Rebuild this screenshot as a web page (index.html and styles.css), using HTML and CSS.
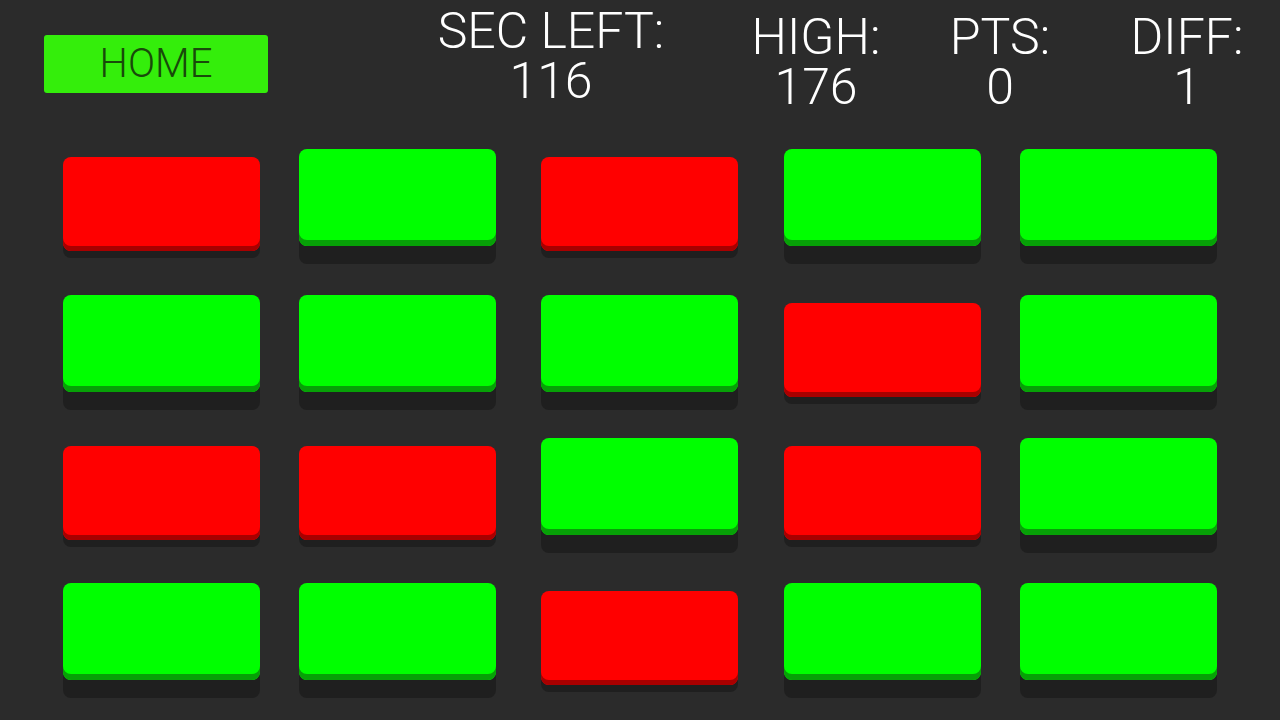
FILE: index.html
```html
<!DOCTYPE html>
<html>
<head>
<meta charset="utf-8">
<link rel="stylesheet" href="styles.css">
</head>
<body>
<div class="screen">
  <header class="header">
    <button class="home">HOME</button>
    <div class="stat stat-sec">SEC LEFT:<br>116</div>
    <div class="stat stat-high">HIGH:<br>176</div>
    <div class="stat stat-pts">PTS:<br>0</div>
    <div class="stat stat-diff">DIFF:<br>1</div>
  </header>
  <main class="board">
    <div class="tile red"></div><div class="tile green"></div><div class="tile red"></div><div class="tile green"></div><div class="tile green"></div>
    <div class="tile green"></div><div class="tile green"></div><div class="tile green"></div><div class="tile red"></div><div class="tile green"></div>
    <div class="tile red"></div><div class="tile red"></div><div class="tile green"></div><div class="tile red"></div><div class="tile green"></div>
    <div class="tile green"></div><div class="tile green"></div><div class="tile red"></div><div class="tile green"></div><div class="tile green"></div>
  </main>
</div>
</body>
</html>
```

FILE: styles.css
```css
html, body {
  margin: 0;
  padding: 0;
  background: #2b2b2b;
}
.screen {
  width: 1280px;
  height: 720px;
  overflow: hidden;
  font-family: Roboto, "Liberation Sans", sans-serif;
}
.header {
  box-sizing: border-box;
  height: 149px;
  display: flex;
  align-items: flex-start;
  padding-left: 44px;
}
.home {
  margin-top: 35px;
  width: 224px;
  height: 58px;
  border: none;
  border-radius: 3px;
  background: #34ee0b;
  color: #184a0a;
  font-family: Roboto, "Liberation Sans", sans-serif;
  font-weight: 300;
  font-size: 40px;
  line-height: 58px;
  padding: 0 0 2px 0;
  text-align: center;
}
.stat {
  color: #ffffff;
  font-weight: 300;
  font-size: 50px;
  line-height: 50px;
  text-align: center;
  white-space: nowrap;
}
.stat-sec { margin-left: 163px; width: 240px; margin-top: 6px; }
.stat-high { margin-left: 70px; width: 150px; margin-top: 12px; }
.stat-pts { margin-left: 49px; width: 120px; margin-top: 12px; }
.stat-diff { margin-left: 62px; width: 130px; margin-top: 12px; }

.board {
  display: grid;
  padding-left: 63px;
  grid-template-columns: 236px 242px 243px 236px 197px;
  grid-template-rows: 146px 143px 145px 137px;
}
.tile {
  width: 197px;
  height: 97px;
  border-radius: 8px;
  box-sizing: border-box;
}
.green {
  background: #00ff00;
  box-shadow: inset 0 -6px 0 #07a007, 0 18px 0 #1f1f1f;
}
.red {
  background: #ff0000;
  height: 94px;
  transform: translateY(8px);
  box-shadow: inset 0 -5px 0 #a80000, 0 7px 0 #1f1f1f;
}
```
